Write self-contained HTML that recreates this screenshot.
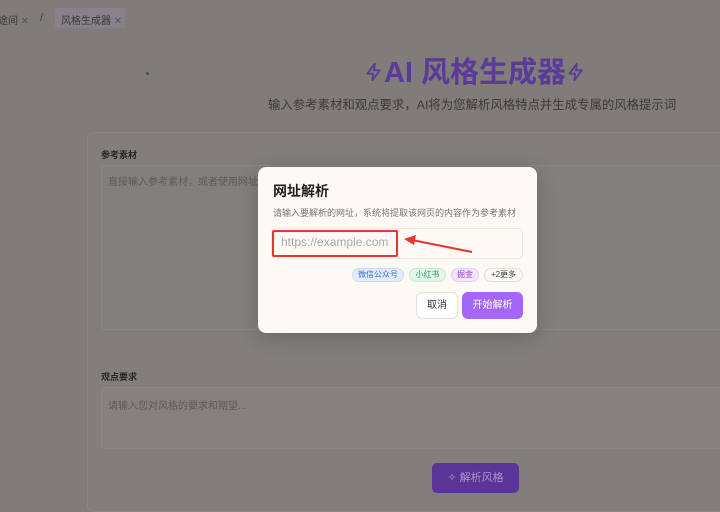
<!DOCTYPE html>
<html><head><meta charset="utf-8"><style>
*{margin:0;padding:0;box-sizing:border-box}
body{width:720px;height:506px;overflow:hidden;background:#7f7c79;font-family:"Liberation Sans","Noto Sans CJK SC",sans-serif;position:relative}
.a{position:absolute}
</style></head><body>
<div class="a" style="left:-2px;top:12px;font-size:10px;color:#3a3835">途间 <span style="color:#555">✕</span></div>
<div class="a" style="left:40px;top:12px;font-size:11px;color:#444">/</div>
<div class="a" style="left:55px;top:8px;width:70px;height:20px;background:#86818a;border-radius:2px;font-size:10px;color:#3a3835;padding:4px 0 0 6px">风格生成器 <span style="color:#555">✕</span></div>
<div class="a" style="left:146px;top:72px;width:3px;height:3px;background:#4a4570;border-radius:50%"></div>
<div class="a" style="left:340px;top:55px;width:270px;text-align:center;font-size:29px;font-weight:bold;color:#5b3a98;line-height:36px;white-space:nowrap">
<svg width="20" height="22" viewBox="0 0 24 24" style="vertical-align:-1px" fill="none" stroke="#5b3a98" stroke-width="2.2" stroke-linejoin="round"><path d="M13 2L4 14h7l-1 8 9-12h-7z"/></svg>AI 风格生成器<svg width="20" height="22" viewBox="0 0 24 24" style="vertical-align:-1px" fill="none" stroke="#5b3a98" stroke-width="2.2" stroke-linejoin="round"><path d="M13 2L4 14h7l-1 8 9-12h-7z"/></svg></div>
<div class="a" style="left:268px;top:95px;font-size:12.4px;color:#3d3a37;white-space:nowrap">输入参考素材和观点要求，AI将为您解析风格特点并生成专属的风格提示词</div>
<div class="a" style="left:87px;top:132px;width:640px;height:380px;background:#817e7b;border:1px solid #878481;border-radius:6px"></div>
<div class="a" style="left:101px;top:148px;font-size:9px;color:#2a2825;font-weight:bold">参考素材</div>
<div class="a" style="left:101px;top:165px;width:630px;height:165px;border:1px solid #8a8683;border-radius:4px;background:#82807e"></div>
<div class="a" style="left:108px;top:173px;font-size:10px;color:#5d5a57">直接输入参考素材，或者使用网址</div>
<div class="a" style="left:101px;top:370px;font-size:9px;color:#2a2825;font-weight:bold">观点要求</div>
<div class="a" style="left:101px;top:387px;width:630px;height:62px;border:1px solid #8a8683;border-radius:4px;background:#85817f"></div>
<div class="a" style="left:108px;top:397px;font-size:10px;color:#5d5a57">请输入您对风格的要求和期望...</div>
<div class="a" style="left:432px;top:463px;width:87px;height:30px;background:#5a3497;border-radius:5px;color:#a997c6;font-size:11px;line-height:30px;text-align:center">✧ 解析风格</div>

<div class="a" style="left:258px;top:167px;width:279px;height:166px;background:#fdf9f5;border-radius:8px;box-shadow:0 4px 20px rgba(0,0,0,.2)"></div>
<div class="a" style="left:273px;top:181px;font-size:14px;font-weight:bold;color:#1f1f1f">网址解析</div>
<div class="a" style="left:273px;top:206px;font-size:9px;color:#777">请输入要解析的网址，系统将提取该网页的内容作为参考素材</div>
<div class="a" style="left:271px;top:228px;width:252px;height:31px;border:1px solid #eee8e2;border-radius:5px"></div>
<div class="a" style="left:272px;top:230px;width:126px;height:27px;border:2px solid #e8362c;border-radius:2px;font-size:12px;color:#a8a8a8;padding:3px 0 0 7px">https://example.com</div>
<svg class="a" style="left:400px;top:232px" width="80" height="26" viewBox="0 0 80 26"><path d="M72 20L12 8" stroke="#e8362c" stroke-width="2"/><path d="M4 7L16 3L14 13z" fill="#e8362c"/></svg>
<div class="a" style="left:352px;top:268px;width:52px;height:14px;border-radius:7px;background:#e3ecfb;border:1px solid #cddbf5;font-size:8px;color:#3b6fd0;text-align:center;line-height:12px">微信公众号</div>
<div class="a" style="left:409px;top:268px;width:37px;height:14px;border-radius:7px;background:#e2f6e9;border:1px solid #c8ebd4;font-size:8px;color:#2f9a57;text-align:center;line-height:12px">小红书</div>
<div class="a" style="left:451px;top:268px;width:28px;height:14px;border-radius:7px;background:#f3e6fb;border:1px solid #e6cff5;font-size:8px;color:#9a3fd0;text-align:center;line-height:12px">掘金</div>
<div class="a" style="left:484px;top:268px;width:39px;height:14px;border-radius:7px;background:#fbf8f5;border:1px solid #ddd;font-size:8px;color:#444;text-align:center;line-height:12px">+2更多</div>
<div class="a" style="left:416px;top:292px;width:42px;height:27px;border:1px solid #e6e0da;border-radius:6px;background:#fff;font-size:10px;color:#333;text-align:center;line-height:25px">取消</div>
<div class="a" style="left:462px;top:292px;width:61px;height:27px;border-radius:6px;background:#a466f6;font-size:10px;color:#fff;text-align:center;line-height:27px">开始解析</div>
</body></html>
